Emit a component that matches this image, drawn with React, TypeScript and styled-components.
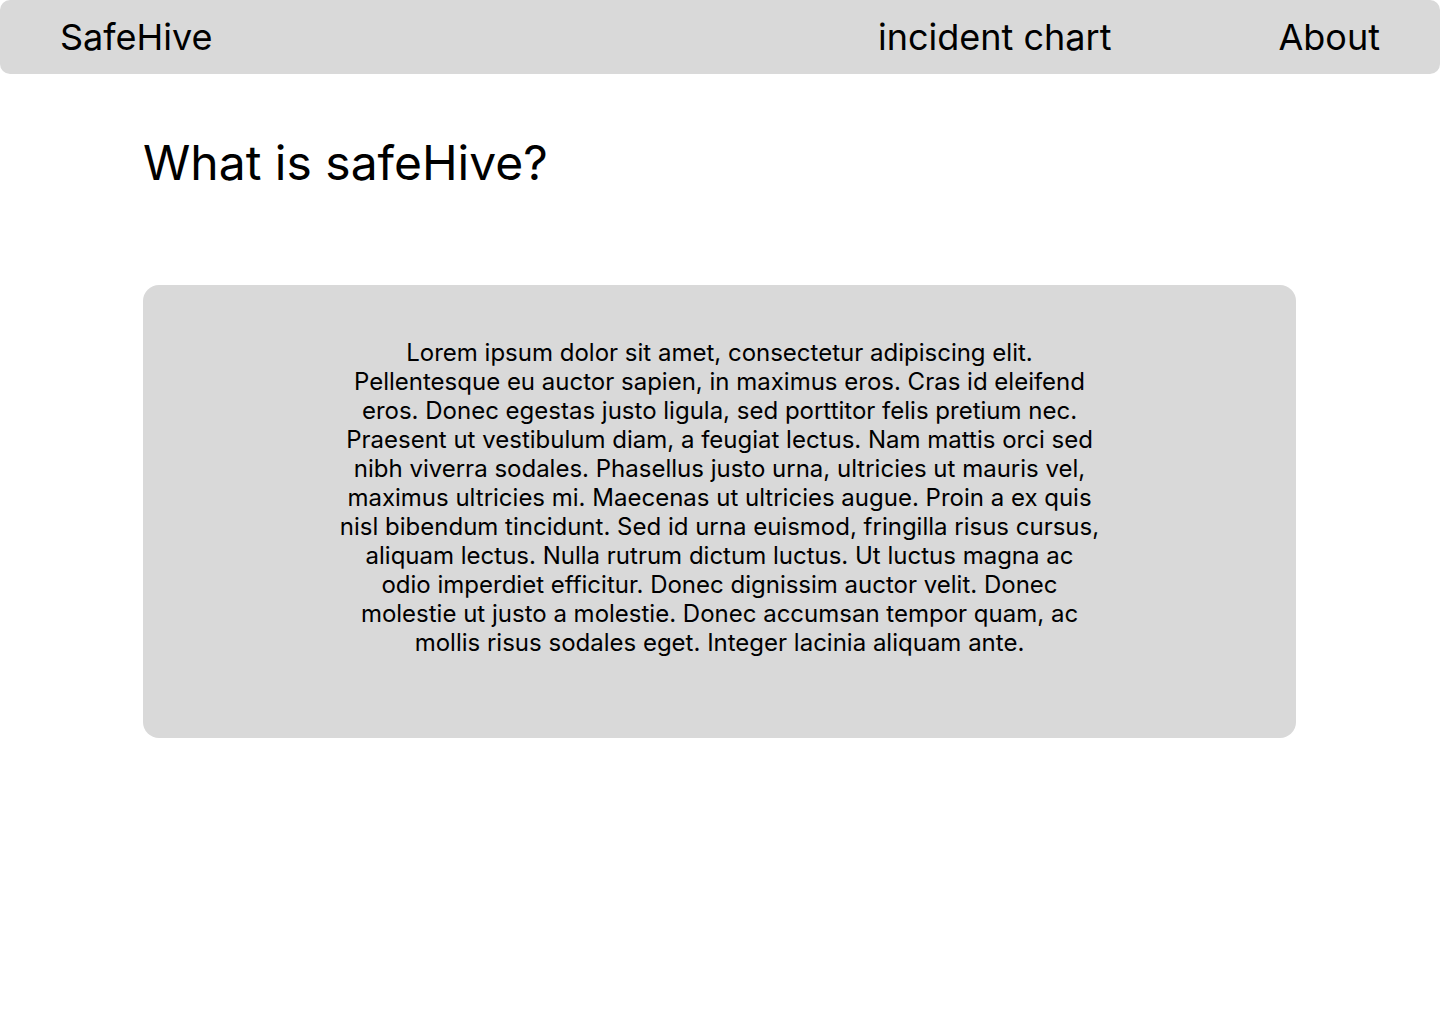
import React from "react";
import styled, { createGlobalStyle } from "styled-components";

const GlobalStyle = createGlobalStyle`
  body {
    margin: 0;
    background: #ffffff;
    font-family: Inter, "Noto Sans", sans-serif;
    color: #000000;
  }
`;

const LOREM =
  "Lorem ipsum dolor sit amet, consectetur adipiscing elit. Pellentesque eu auctor sapien, in maximus eros. Cras id eleifend eros. Donec egestas justo ligula, sed porttitor felis pretium nec. Praesent ut vestibulum diam, a feugiat lectus. Nam mattis orci sed nibh viverra sodales. Phasellus justo urna, ultricies ut mauris vel, maximus ultricies mi. Maecenas ut ultricies augue. Proin a ex quis nisl bibendum tincidunt. Sed id urna euismod, fringilla risus cursus, aliquam lectus. Nulla rutrum dictum luctus. Ut luctus magna ac odio imperdiet efficitur. Donec dignissim auctor velit. Donec molestie ut justo a molestie. Donec accumsan tempor quam, ac mollis risus sodales eget. Integer lacinia aliquam ante.";

const App = () => {
  return (
    <>
      <GlobalStyle />
      <Header>
        <Brand>SafeHive</Brand>
        <Nav>
          <NavLink>incident chart</NavLink>
          <NavLink>About</NavLink>
        </Nav>
      </Header>
      <Main>
        <Title>What is safeHive?</Title>
        <Card>
          <CardText>{LOREM}</CardText>
        </Card>
      </Main>
    </>
  );
};

const Header = styled.header`
  align-items: center;
  background: #d9d9d9;
  border-radius: 10px;
  box-sizing: border-box;
  display: flex;
  height: 74px;
  justify-content: space-between;
  padding: 0 60px;
`;
const Brand = styled.div`
  font-size: 36px;
  font-weight: 400;
`;
const Nav = styled.nav`
  display: flex;
  gap: 167px;
`;
const NavLink = styled.a`
  cursor: pointer;
  font-size: 36px;
`;
const Main = styled.main`
  padding: 0 144px 0 143px;
`;
const Title = styled.h1`
  font-size: 48px;
  font-weight: 400;
  line-height: 58px;
  margin: 60px 0 93px;
`;
const Card = styled.section`
  background: #d9d9d9;
  border-radius: 16px;
  box-sizing: border-box;
  display: flex;
  height: 453px;
  justify-content: center;
  padding-top: 53px;
`;
const CardText = styled.p`
  font-size: 24px;
  line-height: 29px;
  margin: 0;
  text-align: center;
  width: 760px;
`;

export default App;
